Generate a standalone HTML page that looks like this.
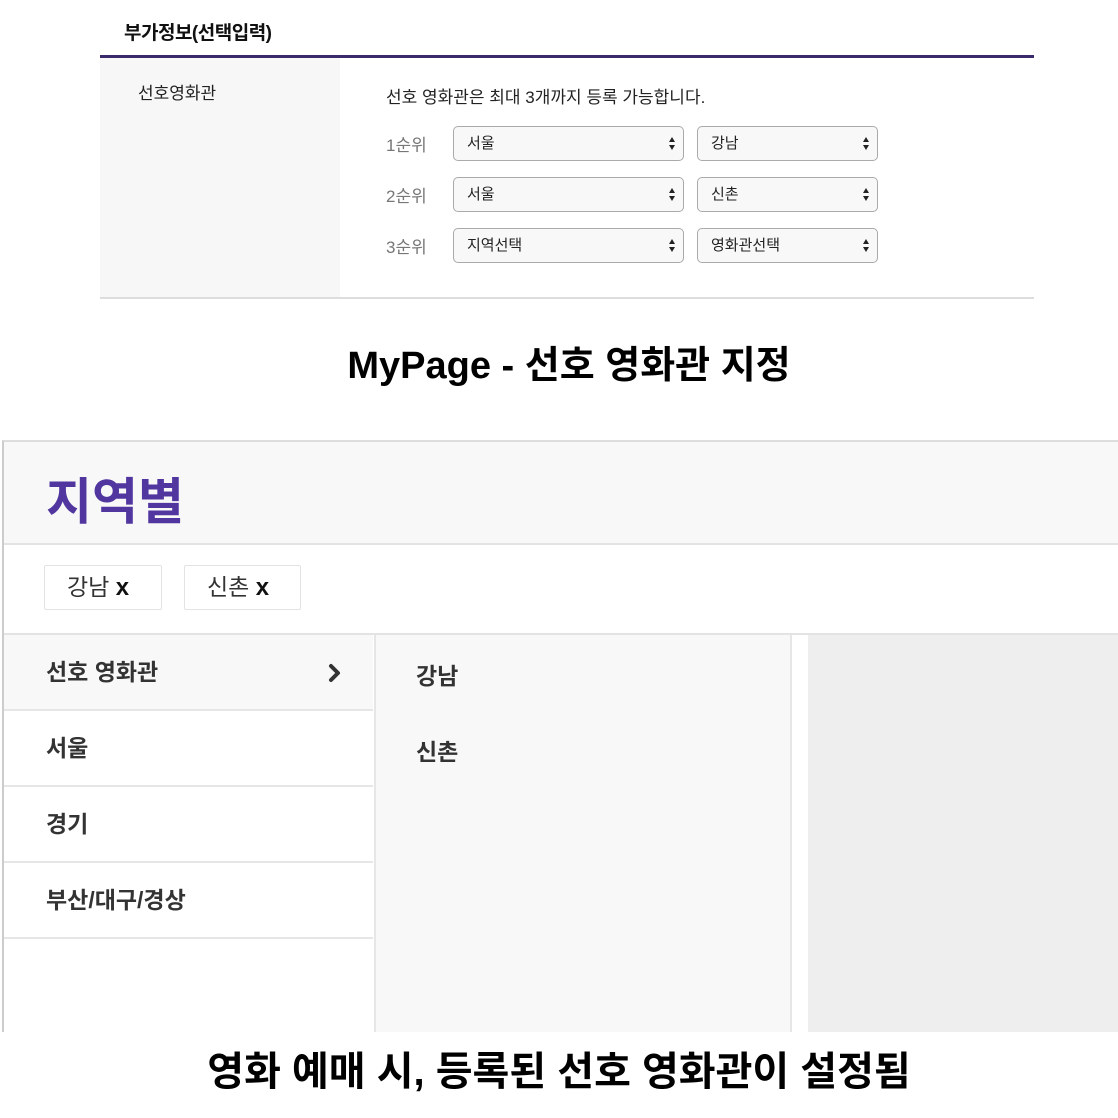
<!DOCTYPE html>
<html><head><meta charset="utf-8"><style>
*{margin:0;padding:0;box-sizing:border-box}
body{width:1118px;height:1118px;background:#fff;position:relative;overflow:hidden;font-family:"Liberation Sans","Noto Sans CJK KR",sans-serif;color:#222}
.a{position:absolute}
.sel{position:absolute;height:35px;border:1px solid #aaa;border-radius:5px;background:#f8f8f8;font-size:15px;line-height:33px;padding-left:13px;color:#222}
.sel:after{content:"";position:absolute;right:8px;top:10px;width:0;height:0;border-left:3.5px solid transparent;border-right:3.5px solid transparent;border-bottom:5px solid #222}
.sel:before{content:"";position:absolute;right:8px;top:18px;width:0;height:0;border-left:3.5px solid transparent;border-right:3.5px solid transparent;border-top:5px solid #222}
.rk{position:absolute;left:386px;font-size:17px;color:#777}
.row{position:absolute;left:4px;width:369px;height:76px;border-bottom:2px solid #e6e6e6;font-size:23px;font-weight:bold;padding-left:42px;line-height:74px;color:#333}
.tag{position:absolute;top:565px;height:45px;border:1px solid #e3e3e3;border-radius:2px;background:#fff;font-size:23px;line-height:43px;padding-left:22px;color:#333}
.tag b{font-size:24px;font-weight:900;color:#111}
</style></head><body>
<div class="a" style="left:124px;top:18px;font-size:19px;font-weight:bold;color:#111;letter-spacing:-0.5px">부가정보(선택입력)</div>
<div class="a" style="left:100px;top:55px;width:934px;height:3px;background:#3b2a6b"></div>
<div class="a" style="left:100px;top:58px;width:240px;height:240px;background:#f7f7f7"></div>
<div class="a" style="left:100px;top:297px;width:934px;height:2px;background:#ddd"></div>
<div class="a" style="left:138px;top:79px;font-size:17px;color:#222">선호영화관</div>
<div class="a" style="left:386px;top:83px;font-size:17px;color:#222">선호 영화관은 최대 3개까지 등록 가능합니다.</div>
<div class="rk" style="top:131px">1순위</div>
<div class="rk" style="top:182px">2순위</div>
<div class="rk" style="top:233px">3순위</div>
<div class="sel" style="left:453px;top:126px;width:231px">서울</div>
<div class="sel" style="left:697px;top:126px;width:181px">강남</div>
<div class="sel" style="left:453px;top:177px;width:231px">서울</div>
<div class="sel" style="left:697px;top:177px;width:181px">신촌</div>
<div class="sel" style="left:453px;top:228px;width:231px">지역선택</div>
<div class="sel" style="left:697px;top:228px;width:181px">영화관선택</div>
<div class="a" style="left:0;top:334px;width:1138px;text-align:center;font-size:38px;font-weight:bold;color:#000">MyPage - 선호 영화관 지정</div>

<div class="a" style="left:2px;top:440px;width:1116px;height:592px;border-left:2px solid #ccc;border-top:2px solid #ddd;background:#fff"></div>
<div class="a" style="left:4px;top:442px;width:1114px;height:103px;background:#f8f8f8;border-bottom:2px solid #e3e3e3"></div>
<div class="a" style="left:46px;top:462px;font-size:50px;font-weight:bold;color:#5136a0">지역별</div>
<div class="tag" style="left:44px;width:118px">강남 <b>x</b></div>
<div class="tag" style="left:184px;width:117px">신촌 <b>x</b></div>
<div class="a" style="left:4px;top:633px;width:1114px;height:2px;background:#e3e3e3"></div>
<div class="a" style="left:374px;top:635px;width:418px;height:397px;background:#f8f8f8;border-left:2px solid #e6e6e6;border-right:2px solid #e6e6e6"></div>
<div class="a" style="left:808px;top:635px;width:310px;height:397px;background:#eee"></div>
<div class="row" style="top:635px;background:#f8f8f8">선호 영화관<svg style="position:absolute;left:324px;top:28px" width="14" height="20" viewBox="0 0 14 20"><path d="M3 3 L10 10 L3 17" fill="none" stroke="#333" stroke-width="4" stroke-linecap="round" stroke-linejoin="round"/></svg></div>
<div class="row" style="top:711px">서울</div>
<div class="row" style="top:787px">경기</div>
<div class="row" style="top:863px">부산/대구/경상</div>
<div class="a" style="left:416px;top:657px;font-size:23px;font-weight:bold;color:#333">강남</div>
<div class="a" style="left:416px;top:733px;font-size:23px;font-weight:bold;color:#333">신촌</div>
<div class="a" style="left:0;top:1039px;width:1118px;text-align:center;font-size:40px;font-weight:bold;color:#000">영화 예매 시, 등록된 선호 영화관이 설정됨</div>
</body></html>
